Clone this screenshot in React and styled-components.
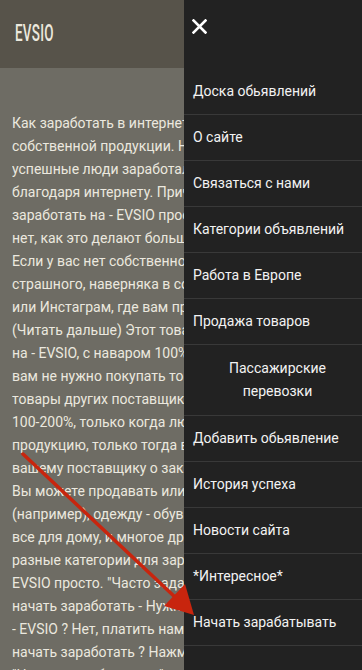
import React from 'react';
import styled, { createGlobalStyle } from 'styled-components';

const GlobalStyle = createGlobalStyle`
  html, body {
    margin: 0;
    padding: 0;
    background: #6e6c64;
  }
  body {
    font-family: Roboto, 'Noto Sans', sans-serif;
    overflow: hidden;
  }
`;

const Page = styled.div`
  position: relative;
  width: 362px;
  height: 670px;
  overflow: hidden;
  display: flex;
  background: #6e6c64;
`;

const Main = styled.main`
  flex: 1;
  min-width: 0;
  overflow: hidden;
  display: flex;
  flex-direction: column;
`;

const Header = styled.header`
  height: 68px;
  flex-shrink: 0;
  background: #57534a;
  display: flex;
  align-items: center;
  padding-left: 15px;
`;

const Logo = styled.div`
  font-family: Roboto, sans-serif;
  font-size: 24px;
  font-weight: 500;
  color: #ece9de;
  transform: scaleX(0.56);
  transform-origin: left center;
  letter-spacing: 0.5px;
  margin-top: -2px;
`;

const Article = styled.div`
  padding: 44px 0 0 12px;
  color: #ebe8df;
  font-size: 14px;
  line-height: 23px;
  overflow: hidden;
`;

const Line = styled.div`
  white-space: nowrap;
  overflow: hidden;
`;

const Drawer = styled.nav`
  width: 178px;
  flex-shrink: 0;
  background: #222222;
  display: flex;
  flex-direction: column;
`;

const CloseRow = styled.div`
  height: 69px;
  flex-shrink: 0;
  display: flex;
  align-items: flex-start;
  padding: 19px 0 0 8px;
  box-sizing: border-box;
`;

const MenuItem = styled.a`
  display: block;
  flex-shrink: 0;
  padding: ${(p) => (p.$center ? '12px 9px 12px 18px' : '11px 9px 11px 9px')};
  color: #f2f2f2;
  font-size: 14px;
  line-height: 23px;
  text-align: ${(p) => (p.$center ? 'center' : 'left')};
  border-bottom: 1px solid #393939;
  text-decoration: none;
`;

const Arrow = styled.svg`
  position: absolute;
  left: 0;
  top: 0;
  pointer-events: none;
`;

const lines = [
  'Как заработать в интернете без вложений, без',
  'собственной продукции. На самом деле многие',
  'успешные люди заработали свой первый миллион',
  'благодаря интернету. Причем многие начинали',
  'заработать на - EVSIO просто, даже если у вас',
  'нет, как это делают большинство продавцов.',
  'Если у вас нет собственной продукции, ничего',
  'страшного, наверняка в социальных сетях',
  'или Инстаграм, где вам предлагают товары',
  '(Читать дальше) Этот товар вы можете продавать',
  'на - EVSIO, с наваром 100% и больше, при этом',
  'вам не нужно покупать товар заранее',
  'товары других поставщиков с наценкой',
  '100-200%, только когда люди закажут вашу',
  'продукцию, только тогда вы сообщаете',
  'вашему поставщику о заказе.',
  'Вы можете продавать или покупать любые',
  '(например), одежду - обувь, электронику,',
  'все для дому, и многое другое. Выбирайте',
  'разные категории для заработка, начать на',
  'EVSIO просто. "Часто задаваемые вопросы: как',
  'начать заработать - Нужно ли платить за',
  '- EVSIO ? Нет, платить нам ничего не нужно.',
  'начать заработать ? Нажмите кнопку',
  '"Начать зарабатывать" в меню сайта.',
];

const menu = [
  'Доска обьявлений',
  'О сайте',
  'Связаться с нами',
  'Категории объявлений',
  'Работа в Европе',
  'Продажа товаров',
  'Пассажирские перевозки',
  'Добавить обьявление',
  'История успеха',
  'Новости сайта',
  '*Интересное*',
  'Начать зарабатывать',
];

const CloseIcon = () => (
  <svg width="15" height="15" viewBox="0 0 15 15">
    <path d="M1.5 1.5 L13.5 13.5 M13.5 1.5 L1.5 13.5" stroke="#ffffff" strokeWidth="2.6" strokeLinecap="square" fill="none" />
  </svg>
);

const App = () => {
  return (
    <Page>
      <GlobalStyle />
      <Main>
        <Header>
          <Logo>EVSIO</Logo>
        </Header>
        <Article>
          {lines.map((l, i) => (
            <Line key={i}>{l}</Line>
          ))}
        </Article>
      </Main>
      <Drawer>
        <CloseRow>
          <CloseIcon />
        </CloseRow>
        {menu.map((m) => (
          <MenuItem key={m} href="#" $center={m === 'Пассажирские перевозки'}>
            {m}
          </MenuItem>
        ))}
      </Drawer>
      <Arrow width="362" height="670" viewBox="0 0 362 670">
        <line x1="23" y1="454" x2="176" y2="598" stroke="#c8250e" strokeWidth="3.5" strokeLinecap="round" />
        <polygon points="194,615 164,606 185,584" fill="#c8250e" />
      </Arrow>
    </Page>
  );
};

export default App;
